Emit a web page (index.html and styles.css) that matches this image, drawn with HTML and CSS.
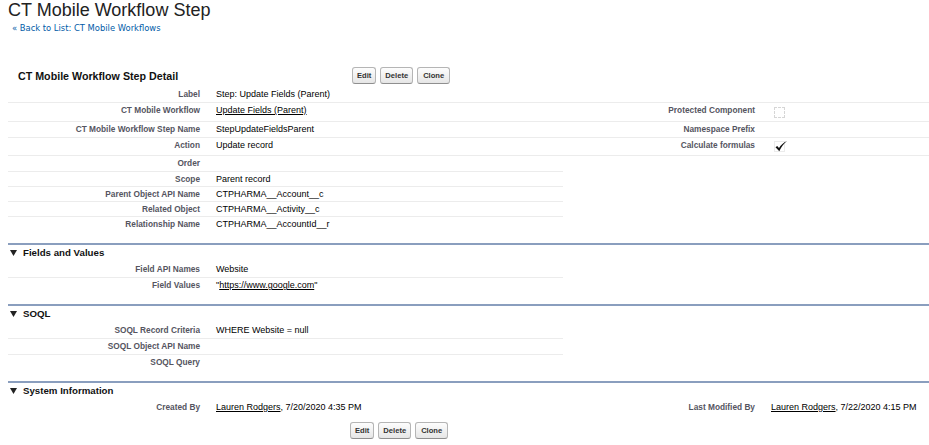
FILE: index.html
```html
<!DOCTYPE html>
<html lang="en">
<head>
    <meta charset="UTF-8">
    <title>CT Mobile Workflow Step</title>
    <link rel="stylesheet" href="styles.css">
</head>
<body>
    <h1 class="page-title">CT Mobile Workflow Step</h1>
    <div class="back-link"><a href="#">&laquo; Back to List: CT Mobile Workflows</a></div>

    <div class="page-block">
        <div class="pb-header">
            <h2 class="pb-title">CT Mobile Workflow Step Detail</h2>
            <div class="pb-buttons">
                <button class="btn">Edit</button>
                <button class="btn">Delete</button>
                <button class="btn">Clone</button>
            </div>
        </div>

        <table class="detail-list">
            <colgroup>
                <col class="c-label"><col class="c-data"><col class="c-label"><col>
            </colgroup>
            <tr>
                <td class="label">Label</td>
                <td class="data">Step: Update Fields (Parent)</td>
                <td class="label"></td>
                <td class="data"></td>
            </tr>
            <tr class="r17">
                <td class="label">CT Mobile Workflow</td>
                <td class="data"><a href="#">Update Fields (Parent)</a></td>
                <td class="label">Protected Component</td>
                <td class="data"><span class="checkbox"></span></td>
            </tr>
            <tr>
                <td class="label">CT Mobile Workflow Step Name</td>
                <td class="data">StepUpdateFieldsParent</td>
                <td class="label">Namespace Prefix</td>
                <td class="data"></td>
            </tr>
            <tr class="r17">
                <td class="label">Action</td>
                <td class="data">Update record</td>
                <td class="label">Calculate formulas</td>
                <td class="data">
                    <svg class="check" width="14" height="11" viewBox="0 0 14 11">
                        <rect x="0.5" y="0.5" width="10" height="10" fill="none" stroke="#d6d6d6" stroke-dasharray="1 1"/>
                        <path d="M1.5 6.2 L3.2 5 L5 7 C7 4 9.5 1.5 13 0 C10 2.5 7.5 5.5 5.3 10.2 Z" fill="#111"/>
                    </svg>
                </td>
            </tr>
            <tr>
                <td class="label">Order</td>
                <td class="data"></td>
                <td class="empty"></td>
                <td class="empty"></td>
            </tr>
            <tr class="r15">
                <td class="label">Scope</td>
                <td class="data">Parent record</td>
                <td class="empty"></td>
                <td class="empty"></td>
            </tr>
            <tr class="r15">
                <td class="label">Parent Object API Name</td>
                <td class="data">CTPHARMA__Account__c</td>
                <td class="empty"></td>
                <td class="empty"></td>
            </tr>
            <tr class="r15">
                <td class="label">Related Object</td>
                <td class="data">CTPHARMA__Activity__c</td>
                <td class="empty"></td>
                <td class="empty"></td>
            </tr>
            <tr class="last">
                <td class="label">Relationship Name</td>
                <td class="data">CTPHARMA__AccountId__r</td>
                <td class="empty"></td>
                <td class="empty"></td>
            </tr>
        </table>

        <div class="sub-header">
            <svg class="twist" width="7" height="6" viewBox="0 0 7 6"><path d="M0 0 H7 L3.5 6 Z" fill="#222"/></svg>
            <h3>Fields and Values</h3>
        </div>
        <table class="detail-list">
            <colgroup>
                <col class="c-label"><col class="c-data"><col class="c-label"><col>
            </colgroup>
            <tr>
                <td class="label">Field API Names</td>
                <td class="data">Website</td>
                <td class="empty"></td>
                <td class="empty"></td>
            </tr>
            <tr class="last">
                <td class="label">Field Values</td>
                <td class="data">"<a href="#">https://www.google.com</a>"</td>
                <td class="empty"></td>
                <td class="empty"></td>
            </tr>
        </table>

        <div class="sub-header">
            <svg class="twist" width="7" height="6" viewBox="0 0 7 6"><path d="M0 0 H7 L3.5 6 Z" fill="#222"/></svg>
            <h3>SOQL</h3>
        </div>
        <table class="detail-list">
            <colgroup>
                <col class="c-label"><col class="c-data"><col class="c-label"><col>
            </colgroup>
            <tr>
                <td class="label">SOQL Record Criteria</td>
                <td class="data">WHERE Website = null</td>
                <td class="empty"></td>
                <td class="empty"></td>
            </tr>
            <tr>
                <td class="label">SOQL Object API Name</td>
                <td class="data"></td>
                <td class="empty"></td>
                <td class="empty"></td>
            </tr>
            <tr class="last">
                <td class="label">SOQL Query</td>
                <td class="data"></td>
                <td class="empty"></td>
                <td class="empty"></td>
            </tr>
        </table>

        <div class="sub-header">
            <svg class="twist" width="7" height="6" viewBox="0 0 7 6"><path d="M0 0 H7 L3.5 6 Z" fill="#222"/></svg>
            <h3>System Information</h3>
        </div>
        <table class="detail-list system">
            <colgroup>
                <col class="c-label"><col class="c-data"><col class="c-label"><col>
            </colgroup>
            <tr class="last">
                <td class="label">Created By</td>
                <td class="data"><a href="#">Lauren Rodgers</a>, 7/20/2020 4:35 PM</td>
                <td class="label">Last Modified By</td>
                <td class="data"><a href="#">Lauren Rodgers</a>, 7/22/2020 4:15 PM</td>
            </tr>
        </table>

        <div class="pb-footer">
            <div class="pb-spacer"></div>
            <div class="pb-buttons">
                <button class="btn">Edit</button>
                <button class="btn">Delete</button>
                <button class="btn">Clone</button>
            </div>
        </div>
    </div>
</body>
</html>
```

FILE: styles.css
```css
body {
    margin: 0;
    padding: 0 0 0 8px;
    font-family: "Liberation Sans", Arial, sans-serif;
    color: #000;
    background: #fff;
}
a {
    color: #000;
}
.page-title {
    margin: 0;
    font-size: 18px;
    line-height: 20px;
    font-weight: normal;
    color: #222;
}
.back-link {
    margin-top: 2px;
    padding-left: 4px;
    font-family: "DejaVu Sans", Verdana, sans-serif;
    font-size: 8.4px;
    line-height: 13px;
}
.back-link a {
    color: #015ba7;
    text-decoration: none;
}
.pb-header {
    margin-top: 29px;
    height: 23px;
    display: flex;
    align-items: center;
}
.pb-title {
    width: 334px;
    margin: 0;
    padding-left: 10px;
    font-size: 10.7px;
    font-weight: bold;
    color: #111;
}
.pb-buttons {
    display: flex;
    gap: 4px;
}
.btn {
    height: 17px;
    margin: 0;
    padding: 0 4px;
    font-family: "Liberation Sans", Arial, sans-serif;
    font-size: 7.6px;
    font-weight: bold;
    color: #333;
    background: linear-gradient(#fdfdfd, #e6e6e6);
    border: 1px solid #b5b5b5;
    border-bottom-color: #8f8f8f;
    border-radius: 3px;
    cursor: pointer;
}
.btn + .btn + .btn {
    padding: 0 5px;
}
.detail-list {
    width: 921px;
    table-layout: fixed;
    border-collapse: collapse;
    margin-bottom: 11px;
}
.c-label {
    width: 200px;
}
.c-data {
    width: 355px;
}
.detail-list td {
    padding: 2px 8px;
    line-height: 11px;
    height: 11px;
    vertical-align: top;
    border-bottom: 1px solid #ececec;
    white-space: nowrap;
}
.detail-list tr.r17 td {
    padding-bottom: 3px;
}
.detail-list tr.r15 td {
    padding-bottom: 1px;
}
.detail-list tr.last td {
    border-bottom: none;
}
.detail-list td.empty {
    border-bottom: none;
}
.label {
    text-align: right;
    font-size: 8.3px;
    font-weight: bold;
    color: #55555f;
}
.data {
    text-align: left;
    font-size: 9px;
    color: #000;
}
.checkbox {
    display: inline-block;
    width: 9px;
    height: 9px;
    margin: 2px 0 0 3px;
    border: 1px dashed #d6d6d6;
    vertical-align: top;
}
.check {
    display: block;
    margin: 1px 0 0 3px;
}
.detail-list.system {
    margin-bottom: 0;
}
.sub-header {
    display: flex;
    align-items: center;
    border-top: 2px solid #8a9ebe;
    padding: 2px 0 3px 2px;
    height: 12px;
}
.twist {
    margin-right: 6px;
}
.sub-header h3 {
    margin: 0;
    font-size: 9.7px;
    line-height: 12px;
    font-weight: bold;
    color: #111;
}
.pb-footer {
    display: flex;
    padding-top: 7px;
}
.pb-spacer {
    width: 342px;
}
```
